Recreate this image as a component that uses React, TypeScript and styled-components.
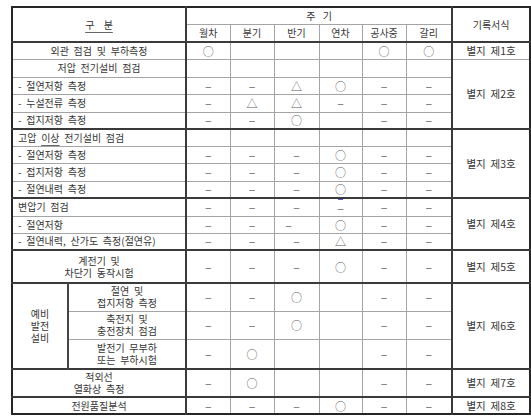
import React from 'react';
import styled, { createGlobalStyle, css } from 'styled-components';

const Global = createGlobalStyle`
  html, body { margin: 0; padding: 0; background: #ffffff; }
  body { font-family: "Noto Sans CJK KR", "Noto Sans", sans-serif; }
`;

const Page = styled.div`
  padding: 6px 0 0 11px;
`;

const Table = styled.table`
  width: 518px;
  table-layout: fixed;
  border-collapse: collapse;
  border: 2px solid #262626;
  font-size: 10px;
  color: #363636;
  word-spacing: 2.5px;
`;

type Sep = 'dark' | 'mid' | undefined;

const Row = styled.tr<{ $h: number; $sep?: Sep }>`
  height: ${p => p.$h}px;
  ${p => p.$sep === 'dark' && css`& > td, & > th { border-top: 2px solid #3a3a3a; }`}
  ${p => p.$sep === 'mid' && css`& > td, & > th { border-top: 1px solid #555; }`}
`;

const base = css`
  border: 1px solid #a4a4a4;
  padding: 0;
  vertical-align: middle;
  line-height: 12px;
  white-space: nowrap;
  overflow: hidden;
`;

const HeadCell = styled.th<{ $darkR?: boolean; $darkL?: boolean; $ws?: number }>`
  ${base};
  font-weight: normal;
  text-align: center;
  ${p => p.$ws && css`word-spacing: ${p.$ws}px;`}
  ${p => p.$darkR && css`border-right: 2px solid #3a3a3a;`}
  ${p => p.$darkL && css`border-left: 2px solid #3a3a3a;`}
`;

const Under = styled.span`
  text-decoration: underline;
  text-underline-offset: 3px;
  text-decoration-color: #666;
`;

const LabelCell = styled.td<{ $left?: boolean }>`
  ${base};
  text-align: ${p => (p.$left ? 'left' : 'center')};
  padding-left: ${p => (p.$left ? '5px' : '0')};
  border-right: 2px solid #3a3a3a;
`;

const GroupCell = styled.td`
  ${base};
  text-align: center;
  border-right: 2px solid #444;
`;

const SubLabelCell = styled.td`
  ${base};
  text-align: center;
  border-right: 2px solid #3a3a3a;
  border-bottom: 1px dotted #999;
`;

const MarkCell = styled.td<{ $shift?: number }>`
  ${base};
  text-align: center;
  color: #5a5a5a;
  font-size: 11px;
  ${p => (p.$shift ? css`padding-right: ${p.$shift}px;` : '')}
`;

const FormCell = styled.td`
  ${base};
  text-align: center;
  border-left: 2px solid #3a3a3a;
  font-size: 10.5px;
`;

const Line = styled.span`
  display: block;
`;

const Dash = styled.span`
  color: #6a6a6a;
  font-family: "Liberation Sans", sans-serif;
  font-size: 10px;
`;

const Stack = styled.span`
  display: inline-flex;
  flex-direction: column;
  align-items: center;
  gap: 3px;
  vertical-align: middle;
`;

const BlueBar = styled.span`
  display: block;
  width: 5px;
  height: 1px;
  background: #5a5ad0;
`;

type M = '' | 'o' | 't' | '-' | 'b' | '-<';

const Marks: React.FC<{ m: M[] }> = ({ m }) => (
  <>
    {m.map((v, i) => {
      if (v === 'o') return <MarkCell key={i}>○</MarkCell>;
      if (v === 't') return <MarkCell key={i}>△</MarkCell>;
      if (v === '-') return <MarkCell key={i}><Dash>–</Dash></MarkCell>;
      if (v === '-<') return <MarkCell key={i} $shift={16}><Dash>–</Dash></MarkCell>;
      if (v === 'b')
        return (
          <MarkCell key={i}>
            <Stack>
              <BlueBar />
              <Dash>–</Dash>
            </Stack>
          </MarkCell>
        );
      return <MarkCell key={i} />;
    })}
  </>
);

const periods = ['월차', '분기', '반기', '연차', '공사중', '갈리'];
const colWidths = [56, 118, 44, 44, 45, 43, 44, 46, 78];

export default function App() {
  return (
    <Page>
      <Global />
      <Table>
        <colgroup>
          {colWidths.map((w, i) => (
            <col key={i} style={{ width: w }} />
          ))}
        </colgroup>
        <tbody>
          <Row $h={17}>
            <HeadCell colSpan={2} rowSpan={2} $darkR $ws={7}>
              <Under>구 분</Under>
            </HeadCell>
            <HeadCell colSpan={6} $ws={5}>주 기</HeadCell>
            <HeadCell rowSpan={2} $darkL>기록서식</HeadCell>
          </Row>
          <Row $h={18}>
            {periods.map(p => (
              <HeadCell key={p}>{p}</HeadCell>
            ))}
          </Row>

          <Row $h={17} $sep="dark">
            <LabelCell colSpan={2}>외관 점검 및 부하측정</LabelCell>
            <Marks m={['o', '', '', '', 'o', 'o']} />
            <FormCell>별지 제1호</FormCell>
          </Row>

          <Row $h={18} $sep="mid">
            <LabelCell colSpan={2}>저압 전기설비 점검</LabelCell>
            <Marks m={['', '', '', '', '', '']} />
            <FormCell rowSpan={4}>별지 제2호</FormCell>
          </Row>
          <Row $h={17}>
            <LabelCell colSpan={2} $left>- 절연저항 측정</LabelCell>
            <Marks m={['-', '-', 't', 'o', '-', '-']} />
          </Row>
          <Row $h={18}>
            <LabelCell colSpan={2} $left>- 누설전류 측정</LabelCell>
            <Marks m={['-', 't', 't', '-', '-', '-']} />
          </Row>
          <Row $h={17}>
            <LabelCell colSpan={2} $left>- 접지저항 측정</LabelCell>
            <Marks m={['-', '-', 'o', '', '-', '-']} />
          </Row>

          <Row $h={17} $sep="dark">
            <LabelCell colSpan={2} $left>
              고압 <Under>이상</Under> 전기설비 점검
            </LabelCell>
            <Marks m={['', '', '', '', '', '']} />
            <FormCell rowSpan={4}>별지 제3호</FormCell>
          </Row>
          <Row $h={17}>
            <LabelCell colSpan={2} $left>- 절연저항 측정</LabelCell>
            <Marks m={['-', '-', '-', 'o', '-', '-']} />
          </Row>
          <Row $h={18}>
            <LabelCell colSpan={2} $left>- 접지저항 측정</LabelCell>
            <Marks m={['-', '-', '-', 'o', '-', '-']} />
          </Row>
          <Row $h={17}>
            <LabelCell colSpan={2} $left>- 절연내력 측정</LabelCell>
            <Marks m={['-', '-', '-', 'o', '-', '-']} />
          </Row>

          <Row $h={18} $sep="dark">
            <LabelCell colSpan={2} $left>변압기 점검</LabelCell>
            <Marks m={['-', '-', '-', 'b', '-', '-']} />
            <FormCell rowSpan={3}>별지 제4호</FormCell>
          </Row>
          <Row $h={17}>
            <LabelCell colSpan={2} $left>- 절연저항</LabelCell>
            <Marks m={['-', '-', '-<', 'o', '-', '-']} />
          </Row>
          <Row $h={17}>
            <LabelCell colSpan={2} $left>- 절연내력, 산가도 측정(절연유)</LabelCell>
            <Marks m={['-', '-', '-', 't', '-', '-']} />
          </Row>

          <Row $h={33} $sep="dark">
            <LabelCell colSpan={2}>
              <Line>계전기 및</Line>
              <Line>차단기 동작시험</Line>
            </LabelCell>
            <Marks m={['-', '-', '-', 'o', '-', '-']} />
            <FormCell>별지 제5호</FormCell>
          </Row>

          <Row $h={28} $sep="dark">
            <GroupCell rowSpan={3}>
              <Line>예비</Line>
              <Line>발전</Line>
              <Line>설비</Line>
            </GroupCell>
            <SubLabelCell>
              <Line>절연 및</Line>
              <Line>접지저항 측정</Line>
            </SubLabelCell>
            <Marks m={['-', '-', 'o', '', '-', '-']} />
            <FormCell rowSpan={3}>별지 제6호</FormCell>
          </Row>
          <Row $h={28}>
            <SubLabelCell>
              <Line>축전지 및</Line>
              <Line>충전장치 점검</Line>
            </SubLabelCell>
            <Marks m={['-', '-', 'o', '', '-', '-']} />
          </Row>
          <Row $h={30}>
            <SubLabelCell>
              <Line>발전기 무부하</Line>
              <Line>또는 부하시험</Line>
            </SubLabelCell>
            <Marks m={['-', 'o', '', '', '-', '-']} />
          </Row>

          <Row $h={28} $sep="dark">
            <LabelCell colSpan={2}>
              <Line>적외선</Line>
              <Line>열화상 측정</Line>
            </LabelCell>
            <Marks m={['-', 'o', '', '', '-', '-']} />
            <FormCell>별지 제7호</FormCell>
          </Row>
          <Row $h={17} $sep="dark">
            <LabelCell colSpan={2}>전원품질분석</LabelCell>
            <Marks m={['-', '-', '-', 'o', '-', '-']} />
            <FormCell>별지 제8호</FormCell>
          </Row>
        </tbody>
      </Table>
    </Page>
  );
}
